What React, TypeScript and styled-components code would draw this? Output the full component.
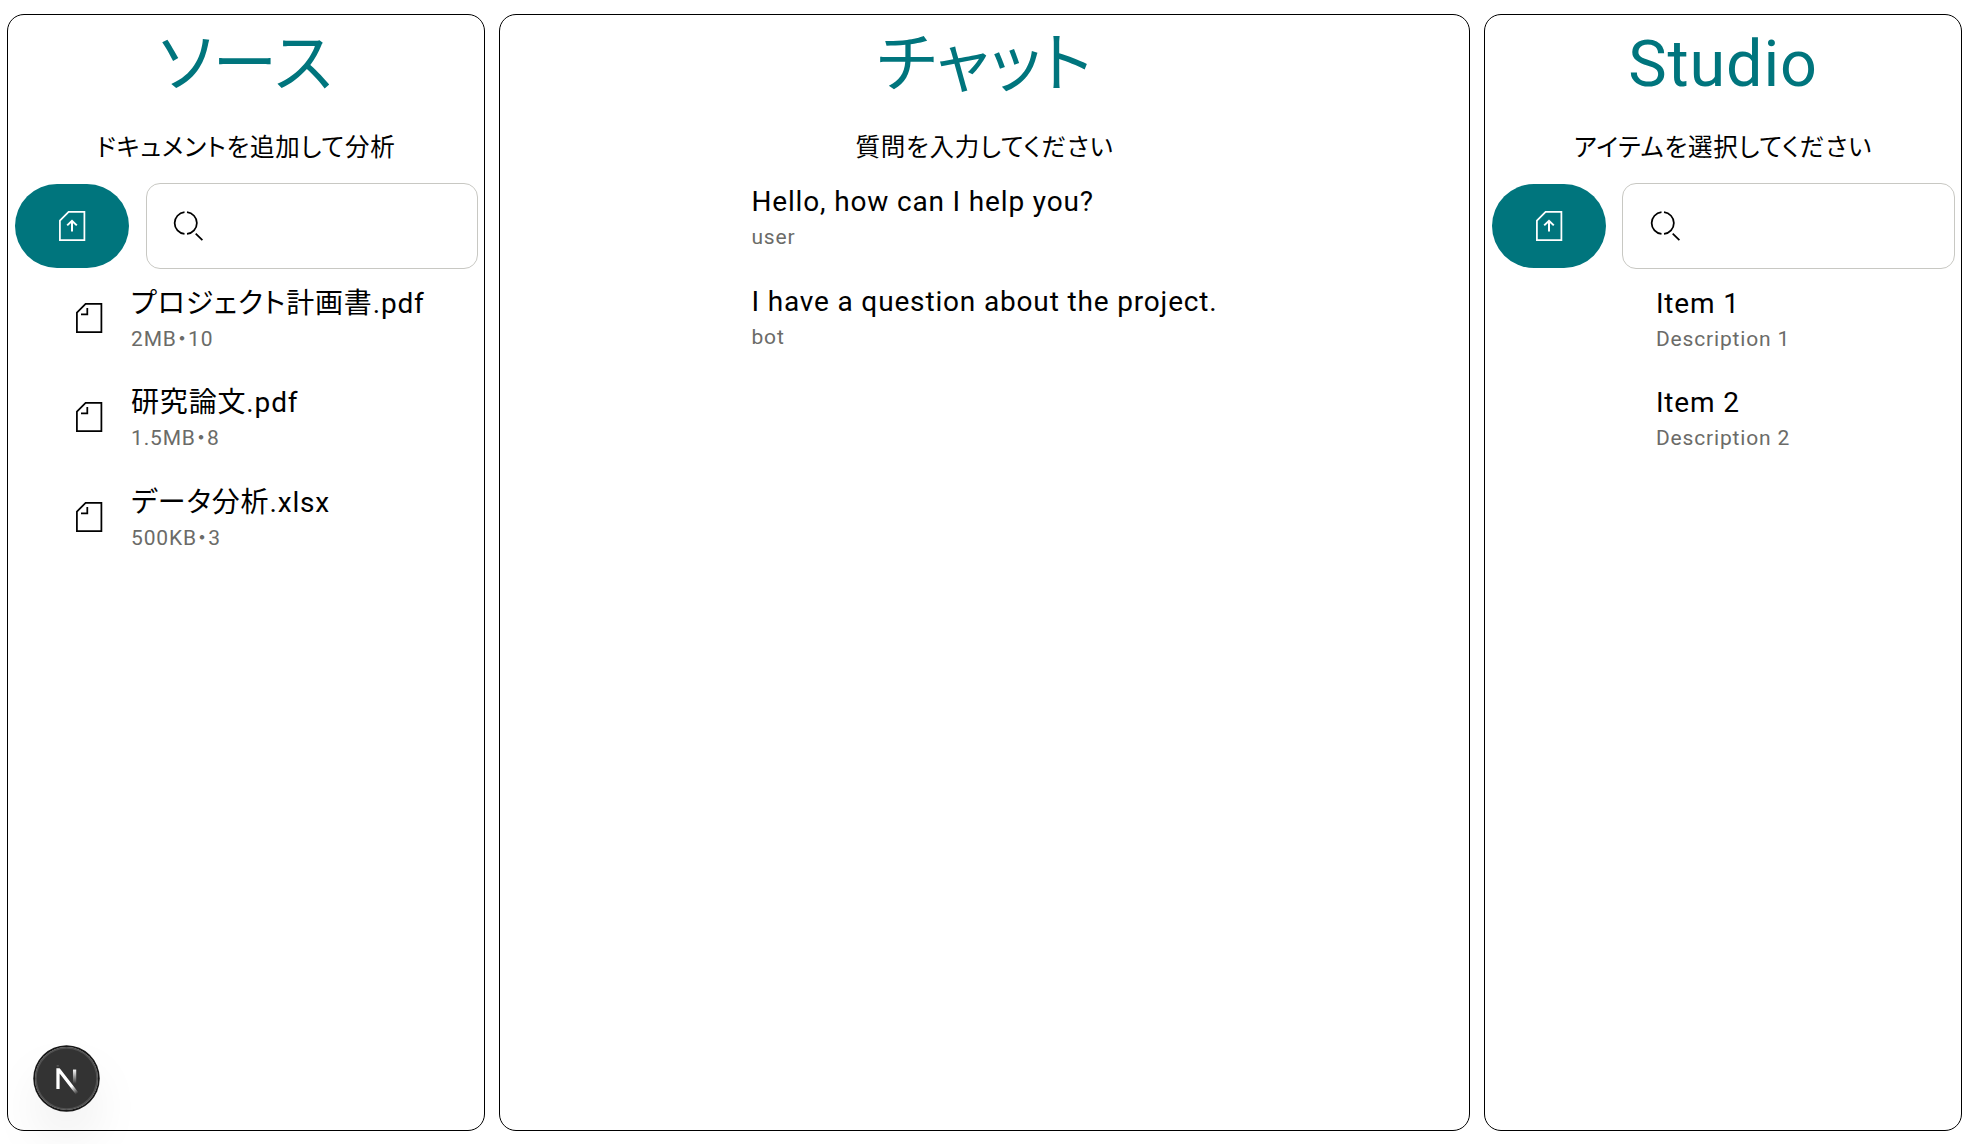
import React from "react";
import styled, { createGlobalStyle } from "styled-components";

const Global = createGlobalStyle`
  * { box-sizing: border-box; margin: 0; padding: 0; }
  body {
    background: #fff;
    color: #000;
    font-family: Roboto, "Noto Sans CJK JP", sans-serif;
    font-feature-settings: "palt";
    letter-spacing: 0.84px;
  }
`;

const Page = styled.main`
  display: flex;
  gap: 14px;
  height: 1144px;
  padding: 14px 7px 13px;
`;

const Panel = styled.section<{ $wide?: boolean }>`
  display: flex;
  flex-direction: column;
  align-items: center;
  flex: ${(p) => (p.$wide ? "1 1 0" : "0 0 478px")};
  border: 1px solid #000;
  border-radius: 17px;
  padding: 0 6px 0 7px;
`;

const Title = styled.h1`
  margin-right: 1px;
  height: 98px;
  line-height: 98px;
  font-size: 64.75px;
  font-weight: 400;
  color: #00757d;
`;

const Subtitle = styled.p`
  margin: 17px 1px 0 0;
  height: 35px;
  line-height: 35px;
  font-size: 24.5px;
`;

const Tools = styled.div<{ $gap: number }>`
  display: flex;
  align-items: center;
  align-self: stretch;
  margin-top: 18px;
  gap: ${(p) => p.$gap}px;
`;

const UploadButton = styled.button`
  display: grid;
  place-items: center;
  width: 114px;
  height: 84px;
  border: 0;
  border-radius: 42px;
  background: #00757d;
  color: #fff;
`;

const SearchBox = styled.label<{ $inset: number }>`
  display: flex;
  align-items: center;
  flex: 1;
  height: 86px;
  padding-left: ${(p) => p.$inset}px;
  border: 1px solid #c8c8c3;
  border-radius: 14px;
`;

const List = styled.ul<{ $pull?: boolean; $indent?: number }>`
  list-style: none;
  margin: ${(p) => (p.$pull ? "-1.6px" : "1.2px")} 1px 0 0;
  ${(p) => p.$indent && `align-self: stretch; padding-left: ${p.$indent}px;`}
`;

const Item = styled.li`
  display: flex;
  align-items: flex-start;
  height: 99.5px;
  gap: 28px;
`;

const ItemIcon = styled.span`
  display: block;
  padding-top: 34.4px;
`;

const Texts = styled.div`
  padding-top: 14.2px;
`;

const Label = styled.div`
  height: 43px;
  line-height: 43px;
  font-size: 28px;
`;

const Meta = styled.div`
  height: 28px;
  line-height: 28px;
  font-size: 21px;
  color: #6b6b68;
`;

const DevBadge = styled.div`
  position: fixed;
  left: 35px;
  top: 1047px;
  width: 63px;
  height: 63px;
  border-radius: 50%;
  background: rgba(0, 0, 0, 0.8);
  box-shadow:
    0 0 0 1.75px #171717,
    inset 0 0 0 1.75px rgba(255, 255, 255, 0.14),
    0 28px 56px -14px rgba(0, 0, 0, 0.22);
`;

const IconSvg = styled.svg`
  display: block;
  fill: none;
  stroke: currentColor;
  stroke-width: 1.75;
`;

const sheet = "M10.6 1.9H26.4V30.1H1.9V10.6Z";

const FileIcon = () => (
  <IconSvg width="28" height="32">
    <path d={sheet} />
    <path d="M6 12.3H12.3V6" />
  </IconSvg>
);

const UploadIcon = () => (
  <IconSvg width="28" height="32">
    <path d={sheet} />
    <path d="M14 21.4V11M9.2 15.4L14 10.8L18.8 15.4" strokeWidth="2" />
  </IconSvg>
);

const SearchIcon = () => (
  <IconSvg width="32" height="32">
    <path d="M12.5 2.2A10.9 10.9 0 0 0 12.5 23.9M15 2.2A10.9 10.9 0 0 1 15 23.9M23.7 23.6L30.4 30.1" />
  </IconSvg>
);

const NLogo = () => (
  <svg width="63" height="63" viewBox="0 0 36 36" fill="none" strokeWidth="1.86">
    <defs>
      <linearGradient id="diag" gradientUnits="userSpaceOnUse" x1="9.955" y1="11.12" x2="15.48" y2="17.97">
        <stop stopColor="#fff" />
        <stop offset="0.604" stopColor="#fff" stopOpacity="0" />
      </linearGradient>
      <linearGradient id="stem" gradientUnits="userSpaceOnUse" x1="11.82" y1="1.4" x2="11.8" y2="9.63">
        <stop stopColor="#fff" />
        <stop offset="1" stopColor="#fff" stopOpacity="0" />
      </linearGradient>
      <clipPath id="top">
        <rect x="0" y="0.8" width="16" height="16" />
      </clipPath>
    </defs>
    <g transform="translate(10.8 11.4)">
      <path d="M13.3 15.2L2.34 1V12.6" stroke="url(#diag)" clipPath="url(#top)" />
      <path d="M11.825 1.5V13.1" stroke="url(#stem)" />
      <path d="M1.6 -0.6H2.8" stroke="#fff" strokeOpacity="0.3" strokeWidth="0.5" />
    </g>
  </svg>
);

interface RowProps {
  label: string;
  meta: string;
  icon?: React.ReactNode;
}

const Row = ({ label, meta, icon }: RowProps) => (
  <Item>
    {icon && <ItemIcon>{icon}</ItemIcon>}
    <Texts>
      <Label>{label}</Label>
      <Meta>{meta}</Meta>
    </Texts>
  </Item>
);

const Toolbar = ({ gap, inset }: { gap: number; inset: number }) => (
  <Tools $gap={gap}>
    <UploadButton>
      <UploadIcon />
    </UploadButton>
    <SearchBox $inset={inset}>
      <SearchIcon />
    </SearchBox>
  </Tools>
);

const files = [
  { name: "プロジェクト計画書.pdf", size: "2MB", count: 10 },
  { name: "研究論文.pdf", size: "1.5MB", count: 8 },
  { name: "データ分析.xlsx", size: "500KB", count: 3 },
];

const messages = [
  { text: "Hello, how can I help you?", role: "user" },
  { text: "I have a question about the project.", role: "bot" },
];

const items = [
  { title: "Item 1", description: "Description 1" },
  { title: "Item 2", description: "Description 2" },
];

export default function App() {
  return (
    <>
      <Global />
      <Page>
        <Panel>
          <Title>ソース</Title>
          <Subtitle>ドキュメントを追加して分析</Subtitle>
          <Toolbar gap={17} inset={25} />
          <List $pull $indent={60}>
            {files.map((f) => (
              <Row key={f.name} icon={<FileIcon />} label={f.name} meta={`${f.size}・${f.count}`} />
            ))}
          </List>
        </Panel>
        <Panel $wide>
          <Title>チャット</Title>
          <Subtitle>質問を入力してください</Subtitle>
          <List>
            {messages.map((m) => (
              <Row key={m.text} label={m.text} meta={m.role} />
            ))}
          </List>
        </Panel>
        <Panel>
          <Title>Studio</Title>
          <Subtitle>アイテムを選択してください</Subtitle>
          <Toolbar gap={16} inset={26} />
          <List $pull>
            {items.map((i) => (
              <Row key={i.title} label={i.title} meta={i.description} />
            ))}
          </List>
        </Panel>
      </Page>
      <DevBadge>
        <NLogo />
      </DevBadge>
    </>
  );
}
